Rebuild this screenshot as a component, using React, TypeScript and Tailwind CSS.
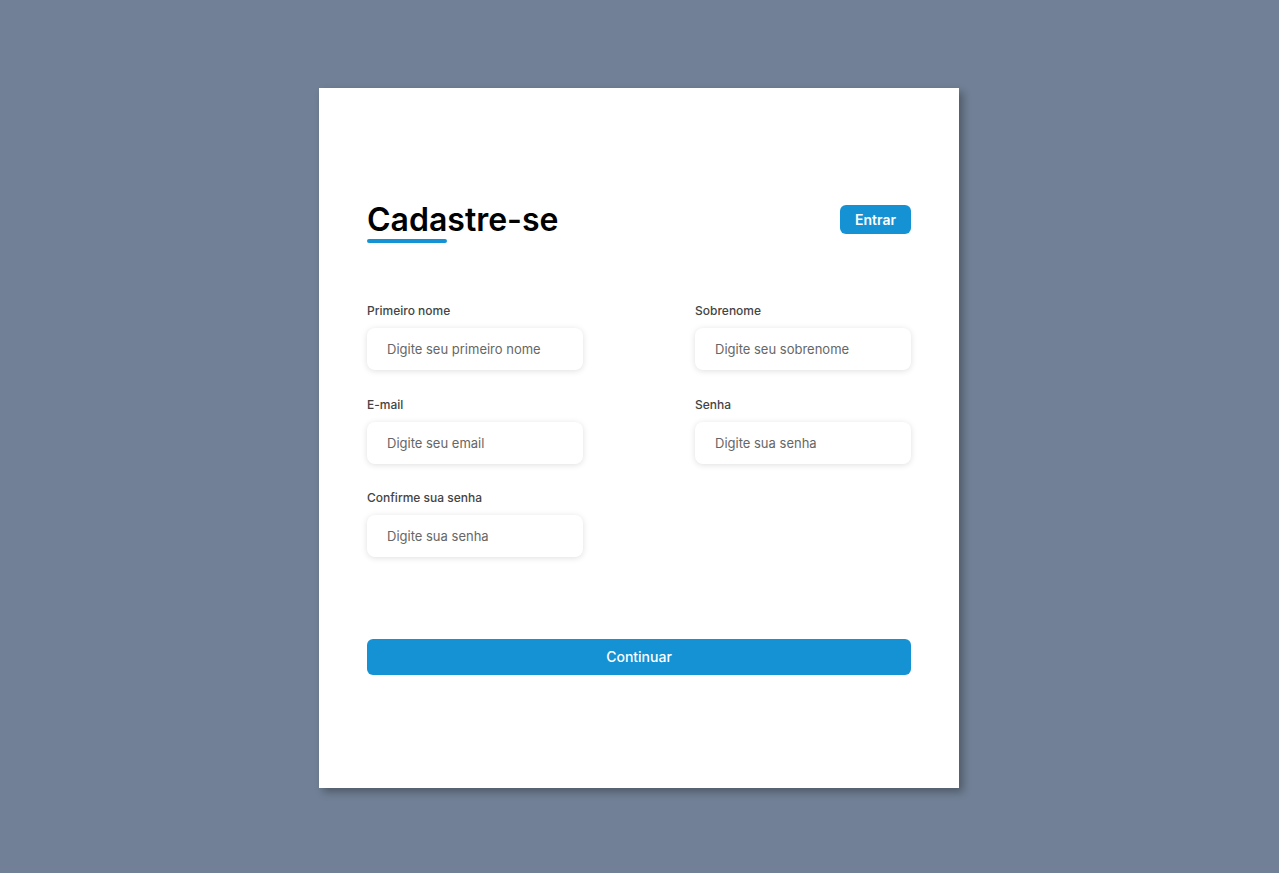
import React from "react";

const fields = [
  { label: "Primeiro nome", placeholder: "Digite seu primeiro nome", type: "text" },
  { label: "Sobrenome", placeholder: "Digite seu sobrenome", type: "text" },
  { label: "E-mail", placeholder: "Digite seu email", type: "email" },
  { label: "Senha", placeholder: "Digite sua senha", type: "password" },
  { label: "Confirme sua senha", placeholder: "Digite sua senha", type: "password" },
];

export default function App() {
  return (
    <div className="min-h-screen w-full bg-[#718096] flex justify-center pr-px pt-[88px] font-['Inter',sans-serif]">
      <div className="w-[640px] h-[700px] bg-white shadow-[4px_4px_8px_rgba(0,0,0,0.3)] px-12 pt-[116px]">
        <div className="flex items-start justify-between">
          <div>
            <h1 className="text-[32px] leading-8 font-semibold text-black">Cadastre-se</h1>
            <div className="mt-[3px] h-1 w-20 rounded-full bg-[#1592d4]" />
          </div>
          <button className="mt-px h-[29px] w-[71px] rounded-md bg-[#1592d4] text-white text-sm font-semibold">
            Entrar
          </button>
        </div>

        <form className="mt-[60px] grid grid-cols-2 gap-x-28 gap-y-[26.5px]">
          {fields.map((f) => (
            <div key={f.label} className="flex flex-col">
              <label className="text-xs leading-4 font-medium text-[#444] mb-[9px]">{f.label}</label>
              <input
                type={f.type}
                placeholder={f.placeholder}
                className="h-[42px] w-full rounded-lg bg-white px-5 text-[13px] text-[#333] placeholder:text-[#666] outline-none shadow-[0_1px_6px_rgba(0,0,0,0.13)]"
              />
            </div>
          ))}
        </form>

        <button className="mt-[82px] w-full h-9 rounded-md bg-[#1592d4] text-white text-sm font-medium">
          Continuar
        </button>
      </div>
    </div>
  );
}
